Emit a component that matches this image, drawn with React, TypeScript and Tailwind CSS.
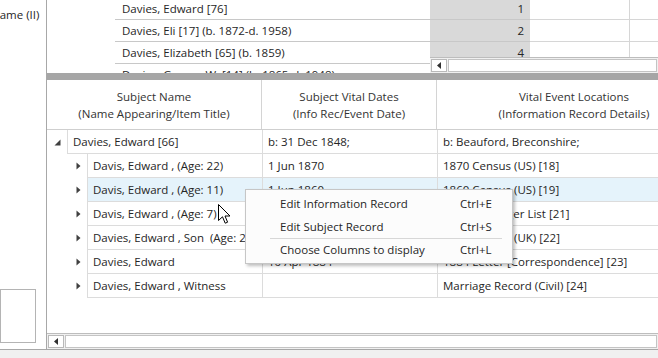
import React from 'react';

const FONT = { fontFamily: '"Open Sans", "Noto Sans", Arial, sans-serif' };

const topRows = [
  { name: 'Davies, Edward [76]', num: '1' },
  { name: 'Davies, Eli [17] (b. 1872-d. 1958)', num: '2' },
  { name: 'Davies, Elizabeth [65] (b. 1859)', num: '4' },
  { name: 'Davies, George W. [14] (b. 1865-d. 1948)', num: '3' },
];

interface Row {
  level: number;
  name: string;
  dates: string;
  place: string;
  selected?: boolean;
}

const rows: Row[] = [
  { level: 0, name: 'Davies, Edward [66]', dates: 'b: 31 Dec 1848;', place: 'b: Beauford, Breconshire;' },
  { level: 1, name: 'Davis, Edward , (Age: 22)', dates: '1 Jun 1870', place: '1870 Census (US) [18]' },
  { level: 1, name: 'Davis, Edward , (Age: 11)', dates: '1 Jun 1860', place: '1860 Census (US) [19]', selected: true },
  { level: 1, name: 'Davis, Edward , (Age: 7)', dates: '1856', place: 'Ship Passenger List [21]' },
  { level: 1, name: 'Davies, Edward , Son  (Age: 22)', dates: '2 Apr 1871', place: '1871 Census (UK) [22]' },
  { level: 1, name: 'Davies, Edward', dates: '10 Apr 1884', place: '1884 Letter [Correspondence] [23]' },
  { level: 1, name: 'Davies, Edward , Witness', dates: '', place: 'Marriage Record (Civil) [24]' },
];

function Expanded() {
  return (
    <svg width="7" height="7" viewBox="0 0 7 7">
      <path d="M6.5 0.5 L6.5 6.5 L0.5 6.5 Z" fill="#404040" />
    </svg>
  );
}

function Collapsed() {
  return (
    <svg width="5" height="8" viewBox="0 0 5 8">
      <path d="M0.5 0.5 L4.5 4 L0.5 7.5 Z" fill="#404040" />
    </svg>
  );
}

function LeftArrow() {
  return (
    <svg width="4" height="7" viewBox="0 0 4 7">
      <path d="M4 0 L0 3.5 L4 7 Z" fill="#303030" />
    </svg>
  );
}

function Cursor() {
  return (
    <svg width="13" height="21" viewBox="0 0 13 21" className="absolute left-[218px] top-[204px]">
      <path
        d="M0.5 0.5 L0.5 16.5 L4.5 12.8 L7.2 19.2 L9.6 18.2 L7 12 L12 12 Z"
        fill="#ffffff"
        stroke="#000000"
        strokeWidth="1"
        strokeLinejoin="miter"
      />
    </svg>
  );
}

function ScrollBar() {
  return (
    <div className="flex h-[16px] gap-[1px] bg-[#f0f0f0] p-[1px] border-t border-[#bdbdbd]">
      <div className="w-[16px] flex items-center justify-center border border-[#b9b9b9] bg-white">
        <LeftArrow />
      </div>
      <div className="flex-1 border border-[#c4c4c4] bg-white" />
    </div>
  );
}

export default function App() {
  return (
    <div className="relative w-[658px] h-[358px] overflow-hidden flex flex-col bg-white text-[11.5px] text-[#262626]" style={FONT}>
      <div className="flex flex-1 min-h-0">
        {/* left pane */}
        <div className="w-[47px] shrink-0 flex flex-col border-r border-[#a8a8a8] bg-white">
          <div className="overflow-hidden whitespace-nowrap mt-[6px] h-[18px] leading-[18px]">
            <span className="-ml-[9px] inline-block">Name (II)</span>
          </div>
          <div className="flex-1" />
          <div className="w-[36px] h-[54px] mb-[6px] border border-[#b4b4b4] bg-white" />
        </div>

        {/* right side */}
        <div className="flex-1 min-w-0 flex flex-col">
          {/* top grid */}
          <div className="relative h-[73px] overflow-hidden">
            <div className="-mt-[2px]">
              {topRows.map((r) => (
                <div key={r.name} className="flex h-[22px] pl-[68px]">
                  <div className="w-[315px] shrink-0 flex items-center pl-[7px] border-b border-[#c8c8c8] whitespace-nowrap overflow-hidden">
                    {r.name}
                  </div>
                  <div className="w-[100px] shrink-0 flex items-center justify-end pr-[6px] bg-[#d9d9d9] border-b border-[#c8c8c8]">
                    {r.num}
                  </div>
                  <div className="w-[100px] shrink-0 border-b border-r border-[#d6d6d6]" />
                  <div className="flex-1 border-b border-[#d6d6d6]" />
                </div>
              ))}
            </div>
            <div className="absolute left-[383px] right-0 top-[57px]">
              <ScrollBar />
            </div>
          </div>

          {/* splitter */}
          <div className="h-[7px] bg-[#a6a6a6]" />

          {/* lower grid */}
          <div className="relative flex-1 min-h-0 flex flex-col overflow-hidden">
            <div className="flex h-[50px] shrink-0 border-b border-[#cfcfcf] text-[#333] leading-[17px]">
              <div className="w-[215px] shrink-0 flex flex-col items-center justify-center border-r border-[#d4d4d4]">
                <span>Subject Name</span>
                <span>(Name Appearing/Item Title)</span>
              </div>
              <div className="w-[175px] shrink-0 flex flex-col items-center justify-center border-r border-[#d4d4d4]">
                <span>Subject Vital Dates</span>
                <span>(Info Rec/Event Date)</span>
              </div>
              <div className="w-[274px] shrink-0 flex flex-col items-center justify-center whitespace-nowrap">
                <span>Vital Event Locations</span>
                <span>(Information Record Details)</span>
              </div>
            </div>

            {rows.map((r, i) => (
              <div key={i} className="flex h-[24px] shrink-0">
                <div
                  className={`shrink-0 flex items-center ${r.level === 0 ? 'w-[20px] pl-[7px]' : 'w-[40px] pl-[29px]'}`}
                >
                  {r.level === 0 ? <Expanded /> : <Collapsed />}
                </div>
                <div
                  className={`shrink-0 flex flex-1 min-w-0 ${r.selected ? 'bg-[#e5f3fb]' : ''}`}
                >
                  <div
                    className={`${r.level === 0 ? 'w-[195px]' : 'w-[175px]'} shrink-0 flex items-center pl-[5px] border-l border-b border-[#dcdcdc] whitespace-pre overflow-hidden`}
                  >
                    {r.name}
                  </div>
                  <div className="w-[175px] shrink-0 flex items-center pl-[5px] border-l border-b border-[#dcdcdc] whitespace-nowrap overflow-hidden">
                    {r.dates}
                  </div>
                  <div className="w-[274px] shrink-0 flex items-center pl-[5px] border-l border-b border-[#dcdcdc] whitespace-nowrap overflow-hidden">
                    {r.place}
                  </div>
                </div>
              </div>
            ))}

            <div className="flex-1" />
            <ScrollBar />
          </div>
        </div>
      </div>
      <div className="h-[9px] shrink-0 bg-[#f0f0f0] border-t border-[#a8a8a8]" />

      {/* context menu */}
      <div className="absolute left-[245px] top-[189px] w-[268px] py-[2px] bg-[#fcfcfc] border border-[#c6c6c6] shadow-[2px_2px_3px_rgba(0,0,0,0.25)] text-[#262626]">
        <div className="flex h-[23px] items-center">
          <span className="w-[214px] pl-[34px]">Edit Information Record</span>
          <span>Ctrl+E</span>
        </div>
        <div className="flex h-[23px] items-center">
          <span className="w-[214px] pl-[34px]">Edit Subject Record</span>
          <span>Ctrl+S</span>
        </div>
        <div className="ml-[24px] mr-[10px] h-[1px] bg-[#d7d7d7]" />
        <div className="flex h-[22px] items-center">
          <span className="w-[214px] pl-[34px]">Choose Columns to display</span>
          <span>Ctrl+L</span>
        </div>
      </div>

      <Cursor />
    </div>
  );
}
